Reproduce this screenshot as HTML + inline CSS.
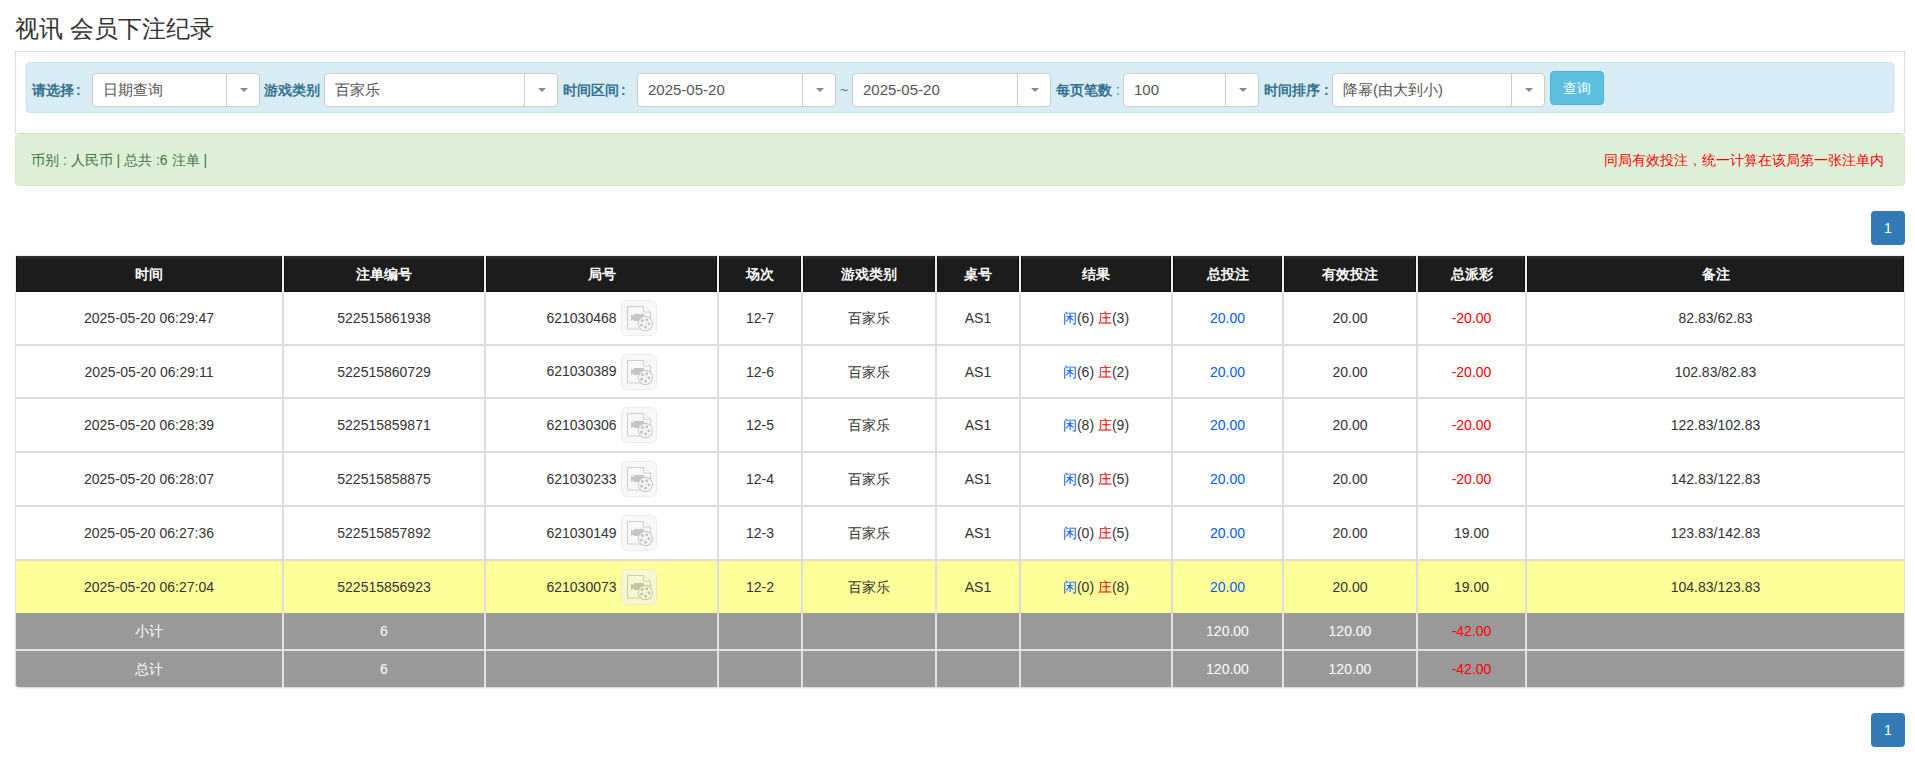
<!DOCTYPE html><html><head><meta charset="utf-8"><style>
*{box-sizing:border-box;margin:0;padding:0}
html,body{width:1915px;height:770px;overflow:hidden;background:#fff}
body{font-family:"Liberation Sans",sans-serif;font-size:14px;color:#333;position:relative}
.a{position:absolute}
.title{left:15px;top:13px;font-size:24px;line-height:32px;color:#333;white-space:nowrap}
.panel{left:15px;top:51px;width:1890px;height:83px;border:1px solid #ddd;background:#fff}
.bar{left:26px;top:62px;width:1868px;height:51px;background:#d9edf7;border:1px solid #bce8f1;border-radius:4px}
.lbl{top:73px;height:34px;line-height:34px;font-weight:bold;color:#31708f;white-space:nowrap;font-size:14px}
.sel{top:73px;height:34px;background:#fff;border:1px solid #ccc;border-radius:4px}
.sel .t{position:absolute;left:10px;top:0;line-height:32px;font-size:15px;color:#555;white-space:nowrap}
.sel .d{position:absolute;top:0;bottom:0;width:1px;background:#ccc}
.sel .ar{position:absolute;top:14px;width:0;height:0;border-left:4px solid transparent;border-right:4px solid transparent;border-top:4px solid #888}
.btn{left:1550px;top:71px;width:54px;height:34px;background:#5bc0de;border:1px solid #46b8da;border-radius:4px;color:#fff;text-align:center;line-height:32px;font-size:14px}
.alert{left:15px;top:134px;width:1890px;height:52px;background:#dff0d8;border:1px solid #d6e9c6;border-radius:4px}
.al{left:31px;top:134px;line-height:52px;font-size:14px;color:#3c763d;white-space:nowrap}
.ar2{right:31px;top:134px;line-height:52px;font-size:14px;color:#f00;white-space:nowrap}
.pg{left:1871px;width:34px;height:34px;background:#337ab7;border-radius:4px;color:#fff;font-weight:normal;text-align:center;line-height:34px;font-size:14px}
.c{position:absolute;text-align:center;white-space:nowrap;display:flex;align-items:center;justify-content:center}
.hd{background:linear-gradient(#333 0,#2a2a2a 2px,#1c1c1c 4px);color:#fff;font-weight:bold;box-shadow:inset 0 -1px #101010,inset 1px 0 #121212,inset -1px 0 #121212}
.cj{position:relative;top:1px}
.bl{color:#005cff}.rd{color:#f00}
</style></head><body>

<div class="a title">视讯 会员下注纪录</div>
<div class="a panel"></div><div class="a bar"></div>
<div class="a lbl" style="left:32px">请选择<span style="margin-left:2px">:</span></div>
<div class="a sel" style="left:92px;width:168px"><span class="t">日期查询</span><span class="d" style="left:133px"></span><span class="ar" style="left:147px"></span></div>
<div class="a lbl" style="left:264px">游戏类别</div>
<div class="a sel" style="left:324px;width:234px"><span class="t">百家乐</span><span class="d" style="left:199px"></span><span class="ar" style="left:213px"></span></div>
<div class="a lbl" style="left:563px">时间区间<span style="margin-left:2px">:</span></div>
<div class="a sel" style="left:637px;width:199px"><span class="t">2025-05-20</span><span class="d" style="left:164px"></span><span class="ar" style="left:178px"></span></div>
<div class="a lbl" style="left:840px;font-weight:normal">~</div>
<div class="a sel" style="left:852px;width:199px"><span class="t">2025-05-20</span><span class="d" style="left:164px"></span><span class="ar" style="left:178px"></span></div>
<div class="a lbl" style="left:1056px">每页笔数<span style="font-weight:normal"> :</span></div>
<div class="a sel" style="left:1123px;width:136px"><span class="t">100</span><span class="d" style="left:101px"></span><span class="ar" style="left:115px"></span></div>
<div class="a lbl" style="left:1264px">时间排序 :</div>
<div class="a sel" style="left:1332px;width:213px"><span class="t">降幂(由大到小)</span><span class="d" style="left:178px"></span><span class="ar" style="left:192px"></span></div>
<div class="a btn">查询</div>
<div class="a alert"></div>
<div class="a al">币别 : 人民币 | 总共 :6 注单 |</div>
<div class="a ar2">同局有效投注，统一计算在该局第一张注单内</div>
<div class="a pg" style="top:211px">1</div>
<div class="a pg" style="top:713px">1</div>
<div class="a" style="left:15px;top:256px;width:1890px;height:431px;background:#ddd;border-radius:0 0 4px 4px"></div>
<div class="a" style="left:15px;top:255px;width:1890px;height:37px;background:#efefef"></div>
<div class="a" style="left:15px;top:613px;width:1890px;height:74px;background:#e2e2e2;border-radius:0 0 4px 4px;box-shadow:0 1px 2px rgba(0,0,0,.18)"></div>
<div class="c hd" style="left:16px;top:256px;width:266px;height:36px;"><span><span style="position:relative;top:1px">时间</span></span></div>
<div class="c hd" style="left:284px;top:256px;width:200px;height:36px;"><span><span style="position:relative;top:1px">注单编号</span></span></div>
<div class="c hd" style="left:486px;top:256px;width:231px;height:36px;"><span><span style="position:relative;top:1px">局号</span></span></div>
<div class="c hd" style="left:719px;top:256px;width:82px;height:36px;"><span><span style="position:relative;top:1px">场次</span></span></div>
<div class="c hd" style="left:803px;top:256px;width:132px;height:36px;"><span><span style="position:relative;top:1px">游戏类别</span></span></div>
<div class="c hd" style="left:937px;top:256px;width:82px;height:36px;"><span><span style="position:relative;top:1px">桌号</span></span></div>
<div class="c hd" style="left:1021px;top:256px;width:150px;height:36px;"><span><span style="position:relative;top:1px">结果</span></span></div>
<div class="c hd" style="left:1173px;top:256px;width:109px;height:36px;"><span><span style="position:relative;top:1px">总投注</span></span></div>
<div class="c hd" style="left:1284px;top:256px;width:132px;height:36px;"><span><span style="position:relative;top:1px">有效投注</span></span></div>
<div class="c hd" style="left:1418px;top:256px;width:107px;height:36px;"><span><span style="position:relative;top:1px">总派彩</span></span></div>
<div class="c hd" style="left:1527px;top:256px;width:377px;height:36px;"><span><span style="position:relative;top:1px">备注</span></span></div>
<div class="c " style="left:16px;top:292px;width:266px;height:52px;background:#fff"><span>2025-05-20 06:29:47</span></div>
<div class="c " style="left:284px;top:292px;width:200px;height:52px;background:#fff"><span>522515861938</span></div>
<div class="c " style="left:486px;top:292px;width:231px;height:52px;background:#fff"><span><span style="position:relative;top:1px">621030468</span><span style="display:inline-block;vertical-align:middle;margin-left:4px;width:36px;height:36px"><svg style="display:block;opacity:.6" width="36" height="36" viewBox="0 0 36 36"><rect x="0.5" y="0.5" width="35" height="35" rx="5" fill="#f5f5f5" stroke="#dfdfdf"/><path d="M6.5 6.5H22.5L29.5 12V29H6.5Z" fill="#f5f5f5" stroke="#acacac" stroke-width="1"/><path d="M22.5 6.5V12H29.5" fill="#fff" stroke="#acacac" stroke-width="1"/><path d="M10 14.5L13 16V14H23V21H13V19.5L10 21Z" fill="#a0a0a0"/><circle cx="24.4" cy="23.5" r="7.1" fill="#f8f8f8" stroke="#a7a7a7" stroke-width="1.1"/><circle cx="21.4" cy="20.6" r="1.55" fill="#9d9d9d"/><circle cx="25.8" cy="19.8" r="1.55" fill="#9d9d9d"/><circle cx="27.9" cy="23.7" r="1.55" fill="#9d9d9d"/><circle cx="24.5" cy="27.1" r="1.55" fill="#9d9d9d"/><circle cx="20.6" cy="25.1" r="1.55" fill="#9d9d9d"/><circle cx="24.1" cy="23.4" r="0.6" fill="#b1b1b1"/></svg></span></span></div>
<div class="c " style="left:719px;top:292px;width:82px;height:52px;background:#fff"><span>12-7</span></div>
<div class="c " style="left:803px;top:292px;width:132px;height:52px;background:#fff"><span><span class="cj">百家乐</span></span></div>
<div class="c " style="left:937px;top:292px;width:82px;height:52px;background:#fff"><span>AS1</span></div>
<div class="c " style="left:1021px;top:292px;width:150px;height:52px;background:#fff"><span><span style="position:relative;top:1px"><span class="bl">闲</span>(6) <span class="rd">庄</span>(3)</span></span></div>
<div class="c " style="left:1173px;top:292px;width:109px;height:52px;background:#fff"><span><span class="bl">20.00</span></span></div>
<div class="c " style="left:1284px;top:292px;width:132px;height:52px;background:#fff"><span>20.00</span></div>
<div class="c " style="left:1418px;top:292px;width:107px;height:52px;background:#fff"><span><span class="rd">-20.00</span></span></div>
<div class="c " style="left:1527px;top:292px;width:377px;height:52px;background:#fff"><span>82.83/62.83</span></div>
<div class="c " style="left:16px;top:346px;width:266px;height:51px;background:#fff"><span>2025-05-20 06:29:11</span></div>
<div class="c " style="left:284px;top:346px;width:200px;height:51px;background:#fff"><span>522515860729</span></div>
<div class="c " style="left:486px;top:346px;width:231px;height:51px;background:#fff"><span><span style="position:relative;top:1px">621030389</span><span style="display:inline-block;vertical-align:middle;margin-left:4px;width:36px;height:36px"><svg style="display:block;opacity:.6" width="36" height="36" viewBox="0 0 36 36"><rect x="0.5" y="0.5" width="35" height="35" rx="5" fill="#f5f5f5" stroke="#dfdfdf"/><path d="M6.5 6.5H22.5L29.5 12V29H6.5Z" fill="#f5f5f5" stroke="#acacac" stroke-width="1"/><path d="M22.5 6.5V12H29.5" fill="#fff" stroke="#acacac" stroke-width="1"/><path d="M10 14.5L13 16V14H23V21H13V19.5L10 21Z" fill="#a0a0a0"/><circle cx="24.4" cy="23.5" r="7.1" fill="#f8f8f8" stroke="#a7a7a7" stroke-width="1.1"/><circle cx="21.4" cy="20.6" r="1.55" fill="#9d9d9d"/><circle cx="25.8" cy="19.8" r="1.55" fill="#9d9d9d"/><circle cx="27.9" cy="23.7" r="1.55" fill="#9d9d9d"/><circle cx="24.5" cy="27.1" r="1.55" fill="#9d9d9d"/><circle cx="20.6" cy="25.1" r="1.55" fill="#9d9d9d"/><circle cx="24.1" cy="23.4" r="0.6" fill="#b1b1b1"/></svg></span></span></div>
<div class="c " style="left:719px;top:346px;width:82px;height:51px;background:#fff"><span>12-6</span></div>
<div class="c " style="left:803px;top:346px;width:132px;height:51px;background:#fff"><span><span class="cj">百家乐</span></span></div>
<div class="c " style="left:937px;top:346px;width:82px;height:51px;background:#fff"><span>AS1</span></div>
<div class="c " style="left:1021px;top:346px;width:150px;height:51px;background:#fff"><span><span style="position:relative;top:1px"><span class="bl">闲</span>(6) <span class="rd">庄</span>(2)</span></span></div>
<div class="c " style="left:1173px;top:346px;width:109px;height:51px;background:#fff"><span><span class="bl">20.00</span></span></div>
<div class="c " style="left:1284px;top:346px;width:132px;height:51px;background:#fff"><span>20.00</span></div>
<div class="c " style="left:1418px;top:346px;width:107px;height:51px;background:#fff"><span><span class="rd">-20.00</span></span></div>
<div class="c " style="left:1527px;top:346px;width:377px;height:51px;background:#fff"><span>102.83/82.83</span></div>
<div class="c " style="left:16px;top:399px;width:266px;height:52px;background:#fff"><span>2025-05-20 06:28:39</span></div>
<div class="c " style="left:284px;top:399px;width:200px;height:52px;background:#fff"><span>522515859871</span></div>
<div class="c " style="left:486px;top:399px;width:231px;height:52px;background:#fff"><span><span style="position:relative;top:1px">621030306</span><span style="display:inline-block;vertical-align:middle;margin-left:4px;width:36px;height:36px"><svg style="display:block;opacity:.6" width="36" height="36" viewBox="0 0 36 36"><rect x="0.5" y="0.5" width="35" height="35" rx="5" fill="#f5f5f5" stroke="#dfdfdf"/><path d="M6.5 6.5H22.5L29.5 12V29H6.5Z" fill="#f5f5f5" stroke="#acacac" stroke-width="1"/><path d="M22.5 6.5V12H29.5" fill="#fff" stroke="#acacac" stroke-width="1"/><path d="M10 14.5L13 16V14H23V21H13V19.5L10 21Z" fill="#a0a0a0"/><circle cx="24.4" cy="23.5" r="7.1" fill="#f8f8f8" stroke="#a7a7a7" stroke-width="1.1"/><circle cx="21.4" cy="20.6" r="1.55" fill="#9d9d9d"/><circle cx="25.8" cy="19.8" r="1.55" fill="#9d9d9d"/><circle cx="27.9" cy="23.7" r="1.55" fill="#9d9d9d"/><circle cx="24.5" cy="27.1" r="1.55" fill="#9d9d9d"/><circle cx="20.6" cy="25.1" r="1.55" fill="#9d9d9d"/><circle cx="24.1" cy="23.4" r="0.6" fill="#b1b1b1"/></svg></span></span></div>
<div class="c " style="left:719px;top:399px;width:82px;height:52px;background:#fff"><span>12-5</span></div>
<div class="c " style="left:803px;top:399px;width:132px;height:52px;background:#fff"><span><span class="cj">百家乐</span></span></div>
<div class="c " style="left:937px;top:399px;width:82px;height:52px;background:#fff"><span>AS1</span></div>
<div class="c " style="left:1021px;top:399px;width:150px;height:52px;background:#fff"><span><span style="position:relative;top:1px"><span class="bl">闲</span>(8) <span class="rd">庄</span>(9)</span></span></div>
<div class="c " style="left:1173px;top:399px;width:109px;height:52px;background:#fff"><span><span class="bl">20.00</span></span></div>
<div class="c " style="left:1284px;top:399px;width:132px;height:52px;background:#fff"><span>20.00</span></div>
<div class="c " style="left:1418px;top:399px;width:107px;height:52px;background:#fff"><span><span class="rd">-20.00</span></span></div>
<div class="c " style="left:1527px;top:399px;width:377px;height:52px;background:#fff"><span>122.83/102.83</span></div>
<div class="c " style="left:16px;top:453px;width:266px;height:52px;background:#fff"><span>2025-05-20 06:28:07</span></div>
<div class="c " style="left:284px;top:453px;width:200px;height:52px;background:#fff"><span>522515858875</span></div>
<div class="c " style="left:486px;top:453px;width:231px;height:52px;background:#fff"><span><span style="position:relative;top:1px">621030233</span><span style="display:inline-block;vertical-align:middle;margin-left:4px;width:36px;height:36px"><svg style="display:block;opacity:.6" width="36" height="36" viewBox="0 0 36 36"><rect x="0.5" y="0.5" width="35" height="35" rx="5" fill="#f5f5f5" stroke="#dfdfdf"/><path d="M6.5 6.5H22.5L29.5 12V29H6.5Z" fill="#f5f5f5" stroke="#acacac" stroke-width="1"/><path d="M22.5 6.5V12H29.5" fill="#fff" stroke="#acacac" stroke-width="1"/><path d="M10 14.5L13 16V14H23V21H13V19.5L10 21Z" fill="#a0a0a0"/><circle cx="24.4" cy="23.5" r="7.1" fill="#f8f8f8" stroke="#a7a7a7" stroke-width="1.1"/><circle cx="21.4" cy="20.6" r="1.55" fill="#9d9d9d"/><circle cx="25.8" cy="19.8" r="1.55" fill="#9d9d9d"/><circle cx="27.9" cy="23.7" r="1.55" fill="#9d9d9d"/><circle cx="24.5" cy="27.1" r="1.55" fill="#9d9d9d"/><circle cx="20.6" cy="25.1" r="1.55" fill="#9d9d9d"/><circle cx="24.1" cy="23.4" r="0.6" fill="#b1b1b1"/></svg></span></span></div>
<div class="c " style="left:719px;top:453px;width:82px;height:52px;background:#fff"><span>12-4</span></div>
<div class="c " style="left:803px;top:453px;width:132px;height:52px;background:#fff"><span><span class="cj">百家乐</span></span></div>
<div class="c " style="left:937px;top:453px;width:82px;height:52px;background:#fff"><span>AS1</span></div>
<div class="c " style="left:1021px;top:453px;width:150px;height:52px;background:#fff"><span><span style="position:relative;top:1px"><span class="bl">闲</span>(8) <span class="rd">庄</span>(5)</span></span></div>
<div class="c " style="left:1173px;top:453px;width:109px;height:52px;background:#fff"><span><span class="bl">20.00</span></span></div>
<div class="c " style="left:1284px;top:453px;width:132px;height:52px;background:#fff"><span>20.00</span></div>
<div class="c " style="left:1418px;top:453px;width:107px;height:52px;background:#fff"><span><span class="rd">-20.00</span></span></div>
<div class="c " style="left:1527px;top:453px;width:377px;height:52px;background:#fff"><span>142.83/122.83</span></div>
<div class="c " style="left:16px;top:507px;width:266px;height:52px;background:#fff"><span>2025-05-20 06:27:36</span></div>
<div class="c " style="left:284px;top:507px;width:200px;height:52px;background:#fff"><span>522515857892</span></div>
<div class="c " style="left:486px;top:507px;width:231px;height:52px;background:#fff"><span><span style="position:relative;top:1px">621030149</span><span style="display:inline-block;vertical-align:middle;margin-left:4px;width:36px;height:36px"><svg style="display:block;opacity:.6" width="36" height="36" viewBox="0 0 36 36"><rect x="0.5" y="0.5" width="35" height="35" rx="5" fill="#f5f5f5" stroke="#dfdfdf"/><path d="M6.5 6.5H22.5L29.5 12V29H6.5Z" fill="#f5f5f5" stroke="#acacac" stroke-width="1"/><path d="M22.5 6.5V12H29.5" fill="#fff" stroke="#acacac" stroke-width="1"/><path d="M10 14.5L13 16V14H23V21H13V19.5L10 21Z" fill="#a0a0a0"/><circle cx="24.4" cy="23.5" r="7.1" fill="#f8f8f8" stroke="#a7a7a7" stroke-width="1.1"/><circle cx="21.4" cy="20.6" r="1.55" fill="#9d9d9d"/><circle cx="25.8" cy="19.8" r="1.55" fill="#9d9d9d"/><circle cx="27.9" cy="23.7" r="1.55" fill="#9d9d9d"/><circle cx="24.5" cy="27.1" r="1.55" fill="#9d9d9d"/><circle cx="20.6" cy="25.1" r="1.55" fill="#9d9d9d"/><circle cx="24.1" cy="23.4" r="0.6" fill="#b1b1b1"/></svg></span></span></div>
<div class="c " style="left:719px;top:507px;width:82px;height:52px;background:#fff"><span>12-3</span></div>
<div class="c " style="left:803px;top:507px;width:132px;height:52px;background:#fff"><span><span class="cj">百家乐</span></span></div>
<div class="c " style="left:937px;top:507px;width:82px;height:52px;background:#fff"><span>AS1</span></div>
<div class="c " style="left:1021px;top:507px;width:150px;height:52px;background:#fff"><span><span style="position:relative;top:1px"><span class="bl">闲</span>(0) <span class="rd">庄</span>(5)</span></span></div>
<div class="c " style="left:1173px;top:507px;width:109px;height:52px;background:#fff"><span><span class="bl">20.00</span></span></div>
<div class="c " style="left:1284px;top:507px;width:132px;height:52px;background:#fff"><span>20.00</span></div>
<div class="c " style="left:1418px;top:507px;width:107px;height:52px;background:#fff"><span>19.00</span></div>
<div class="c " style="left:1527px;top:507px;width:377px;height:52px;background:#fff"><span>123.83/142.83</span></div>
<div class="c " style="left:16px;top:561px;width:266px;height:52px;background:#ffff99"><span>2025-05-20 06:27:04</span></div>
<div class="c " style="left:284px;top:561px;width:200px;height:52px;background:#ffff99"><span>522515856923</span></div>
<div class="c " style="left:486px;top:561px;width:231px;height:52px;background:#ffff99"><span><span style="position:relative;top:1px">621030073</span><span style="display:inline-block;vertical-align:middle;margin-left:4px;width:36px;height:36px"><svg style="display:block;opacity:.6" width="36" height="36" viewBox="0 0 36 36"><rect x="0.5" y="0.5" width="35" height="35" rx="5" fill="#f5f5f5" stroke="#dfdfdf"/><path d="M6.5 6.5H22.5L29.5 12V29H6.5Z" fill="#f5f5f5" stroke="#acacac" stroke-width="1"/><path d="M22.5 6.5V12H29.5" fill="#fff" stroke="#acacac" stroke-width="1"/><path d="M10 14.5L13 16V14H23V21H13V19.5L10 21Z" fill="#a0a0a0"/><circle cx="24.4" cy="23.5" r="7.1" fill="#f8f8f8" stroke="#a7a7a7" stroke-width="1.1"/><circle cx="21.4" cy="20.6" r="1.55" fill="#9d9d9d"/><circle cx="25.8" cy="19.8" r="1.55" fill="#9d9d9d"/><circle cx="27.9" cy="23.7" r="1.55" fill="#9d9d9d"/><circle cx="24.5" cy="27.1" r="1.55" fill="#9d9d9d"/><circle cx="20.6" cy="25.1" r="1.55" fill="#9d9d9d"/><circle cx="24.1" cy="23.4" r="0.6" fill="#b1b1b1"/></svg></span></span></div>
<div class="c " style="left:719px;top:561px;width:82px;height:52px;background:#ffff99"><span>12-2</span></div>
<div class="c " style="left:803px;top:561px;width:132px;height:52px;background:#ffff99"><span><span class="cj">百家乐</span></span></div>
<div class="c " style="left:937px;top:561px;width:82px;height:52px;background:#ffff99"><span>AS1</span></div>
<div class="c " style="left:1021px;top:561px;width:150px;height:52px;background:#ffff99"><span><span style="position:relative;top:1px"><span class="bl">闲</span>(0) <span class="rd">庄</span>(8)</span></span></div>
<div class="c " style="left:1173px;top:561px;width:109px;height:52px;background:#ffff99"><span><span class="bl">20.00</span></span></div>
<div class="c " style="left:1284px;top:561px;width:132px;height:52px;background:#ffff99"><span>20.00</span></div>
<div class="c " style="left:1418px;top:561px;width:107px;height:52px;background:#ffff99"><span>19.00</span></div>
<div class="c " style="left:1527px;top:561px;width:377px;height:52px;background:#ffff99"><span>104.83/123.83</span></div>
<div class="c " style="left:16px;top:613px;width:266px;height:36px;background:#999;color:#fff;"><span><span class="cj">小计</span></span></div>
<div class="c " style="left:284px;top:613px;width:200px;height:36px;background:#999;color:#fff;"><span>6</span></div>
<div class="c " style="left:486px;top:613px;width:231px;height:36px;background:#999;color:#fff;"><span></span></div>
<div class="c " style="left:719px;top:613px;width:82px;height:36px;background:#999;color:#fff;"><span></span></div>
<div class="c " style="left:803px;top:613px;width:132px;height:36px;background:#999;color:#fff;"><span></span></div>
<div class="c " style="left:937px;top:613px;width:82px;height:36px;background:#999;color:#fff;"><span></span></div>
<div class="c " style="left:1021px;top:613px;width:150px;height:36px;background:#999;color:#fff;"><span></span></div>
<div class="c " style="left:1173px;top:613px;width:109px;height:36px;background:#999;color:#fff;"><span>120.00</span></div>
<div class="c " style="left:1284px;top:613px;width:132px;height:36px;background:#999;color:#fff;"><span>120.00</span></div>
<div class="c " style="left:1418px;top:613px;width:107px;height:36px;background:#999;color:#fff;"><span><span class="rd">-42.00</span></span></div>
<div class="c " style="left:1527px;top:613px;width:377px;height:36px;background:#999;color:#fff;"><span></span></div>
<div class="c " style="left:16px;top:651px;width:266px;height:36px;background:#999;color:#fff;border-bottom-left-radius:3px;"><span><span class="cj">总计</span></span></div>
<div class="c " style="left:284px;top:651px;width:200px;height:36px;background:#999;color:#fff;"><span>6</span></div>
<div class="c " style="left:486px;top:651px;width:231px;height:36px;background:#999;color:#fff;"><span></span></div>
<div class="c " style="left:719px;top:651px;width:82px;height:36px;background:#999;color:#fff;"><span></span></div>
<div class="c " style="left:803px;top:651px;width:132px;height:36px;background:#999;color:#fff;"><span></span></div>
<div class="c " style="left:937px;top:651px;width:82px;height:36px;background:#999;color:#fff;"><span></span></div>
<div class="c " style="left:1021px;top:651px;width:150px;height:36px;background:#999;color:#fff;"><span></span></div>
<div class="c " style="left:1173px;top:651px;width:109px;height:36px;background:#999;color:#fff;"><span>120.00</span></div>
<div class="c " style="left:1284px;top:651px;width:132px;height:36px;background:#999;color:#fff;"><span>120.00</span></div>
<div class="c " style="left:1418px;top:651px;width:107px;height:36px;background:#999;color:#fff;"><span><span class="rd">-42.00</span></span></div>
<div class="c " style="left:1527px;top:651px;width:377px;height:36px;background:#999;color:#fff;border-bottom-right-radius:3px;"><span></span></div>
</body></html>
